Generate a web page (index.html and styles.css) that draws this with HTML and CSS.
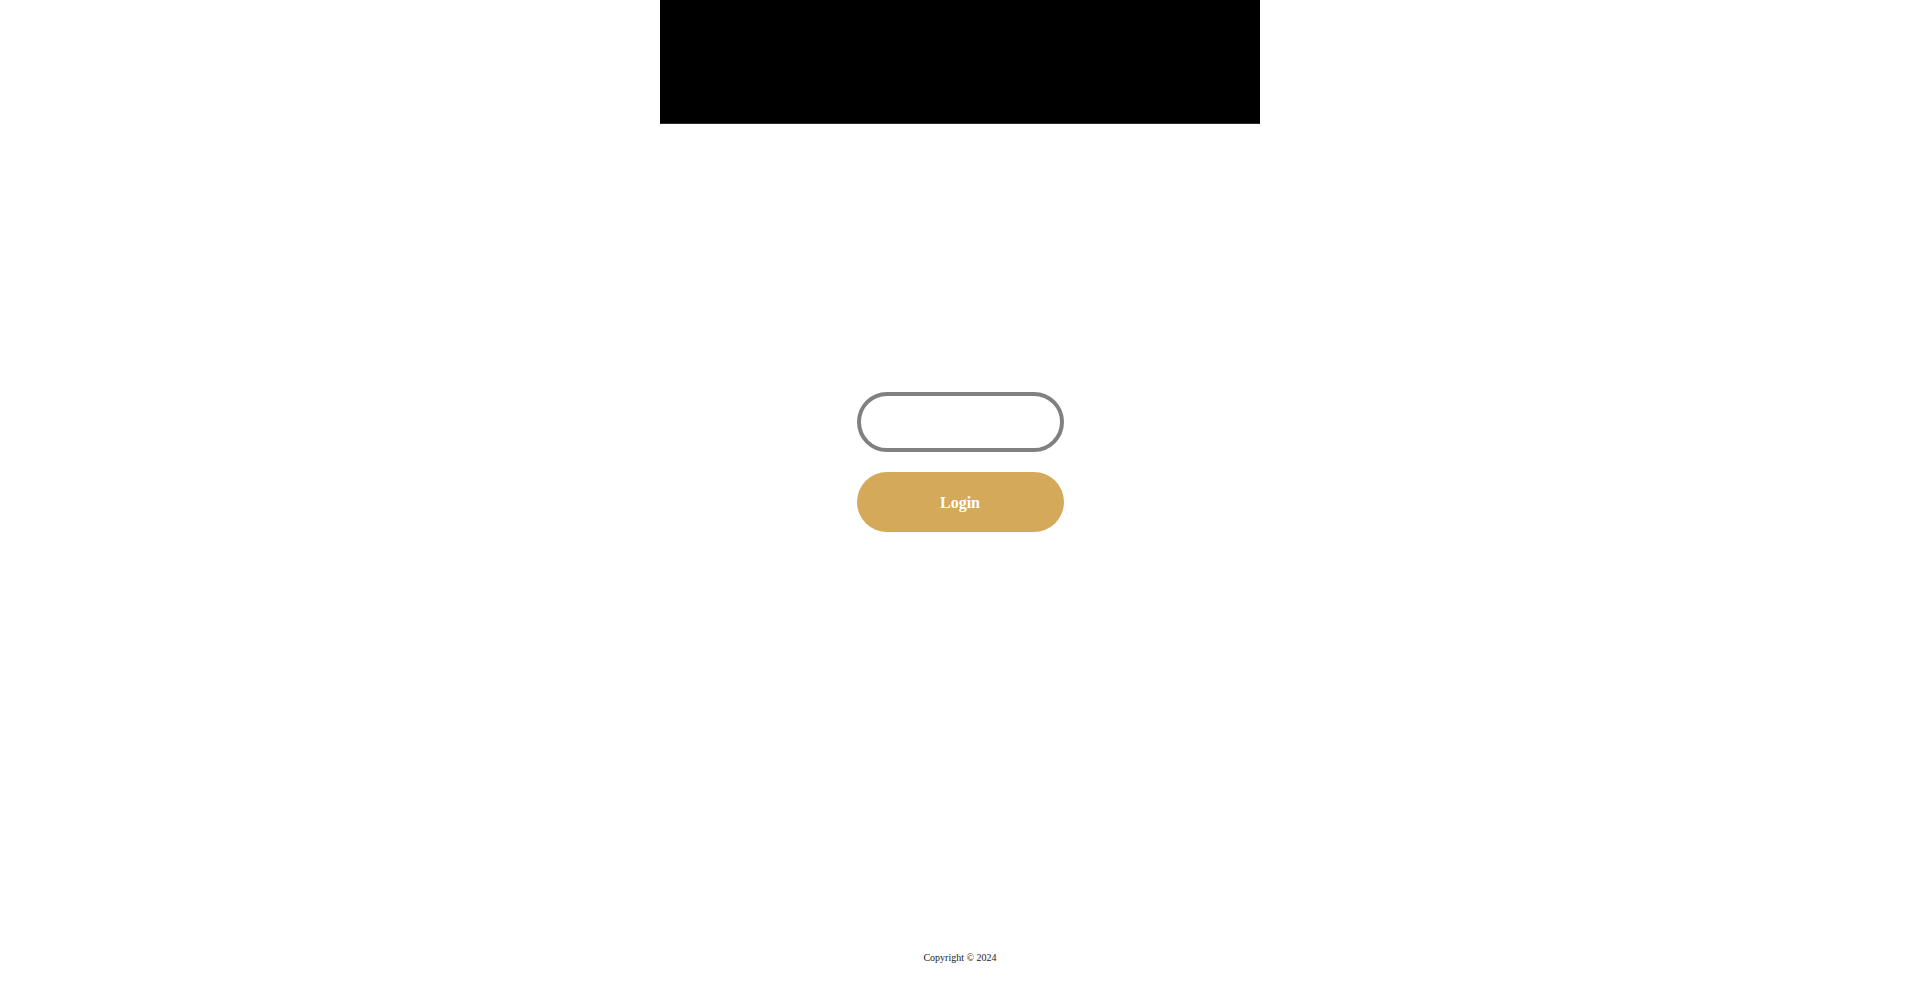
FILE: index.html
```html
<!DOCTYPE html>
<html lang="en">
<head>
<meta charset="utf-8">
<title>Login</title>
<link rel="stylesheet" href="styles.css">
</head>
<body>
<div class="page">
  <header class="banner"><div class="banner-img"></div></header>
  <main class="main">
    <form class="login-form">
      <input class="field" type="text" aria-label="Password">
      <button class="login-btn" type="button">Login</button>
    </form>
  </main>
  <footer class="footer">Copyright © 2024</footer>
</div>
</body>
</html>
```

FILE: styles.css
```css
html, body {
  margin: 0;
  padding: 0;
  background: #ffffff;
  font-family: "Liberation Serif", "Times New Roman", serif;
}
.page {
  min-height: 993px;
  display: flex;
  flex-direction: column;
}
.banner {
  display: flex;
  justify-content: center;
}
.banner-img {
  width: 600px;
  height: 123px;
  background: #000000;
  border-bottom: 1px solid #2a2a2a;
}
.main {
  display: flex;
  justify-content: center;
  padding-top: 268px;
}
.login-form {
  display: flex;
  flex-direction: column;
  align-items: center;
  gap: 20px;
}
.field {
  box-sizing: border-box;
  width: 207px;
  height: 60px;
  border: 4px solid #808080;
  border-radius: 30px;
  background: #ffffff;
  outline: none;
  padding: 0 16px;
  font-family: inherit;
  font-size: 16px;
}
.login-btn {
  box-sizing: border-box;
  width: 207px;
  height: 60px;
  border: none;
  border-radius: 30px;
  background: #d4a95a;
  color: #ffffff;
  font-family: "Liberation Serif", "Times New Roman", serif;
  font-weight: bold;
  font-size: 16px;
  padding-top: 2px;
}
.footer {
  margin-top: auto;
  text-align: center;
  font-size: 10px;
  color: #222222;
  padding-bottom: 30px;
}
```
